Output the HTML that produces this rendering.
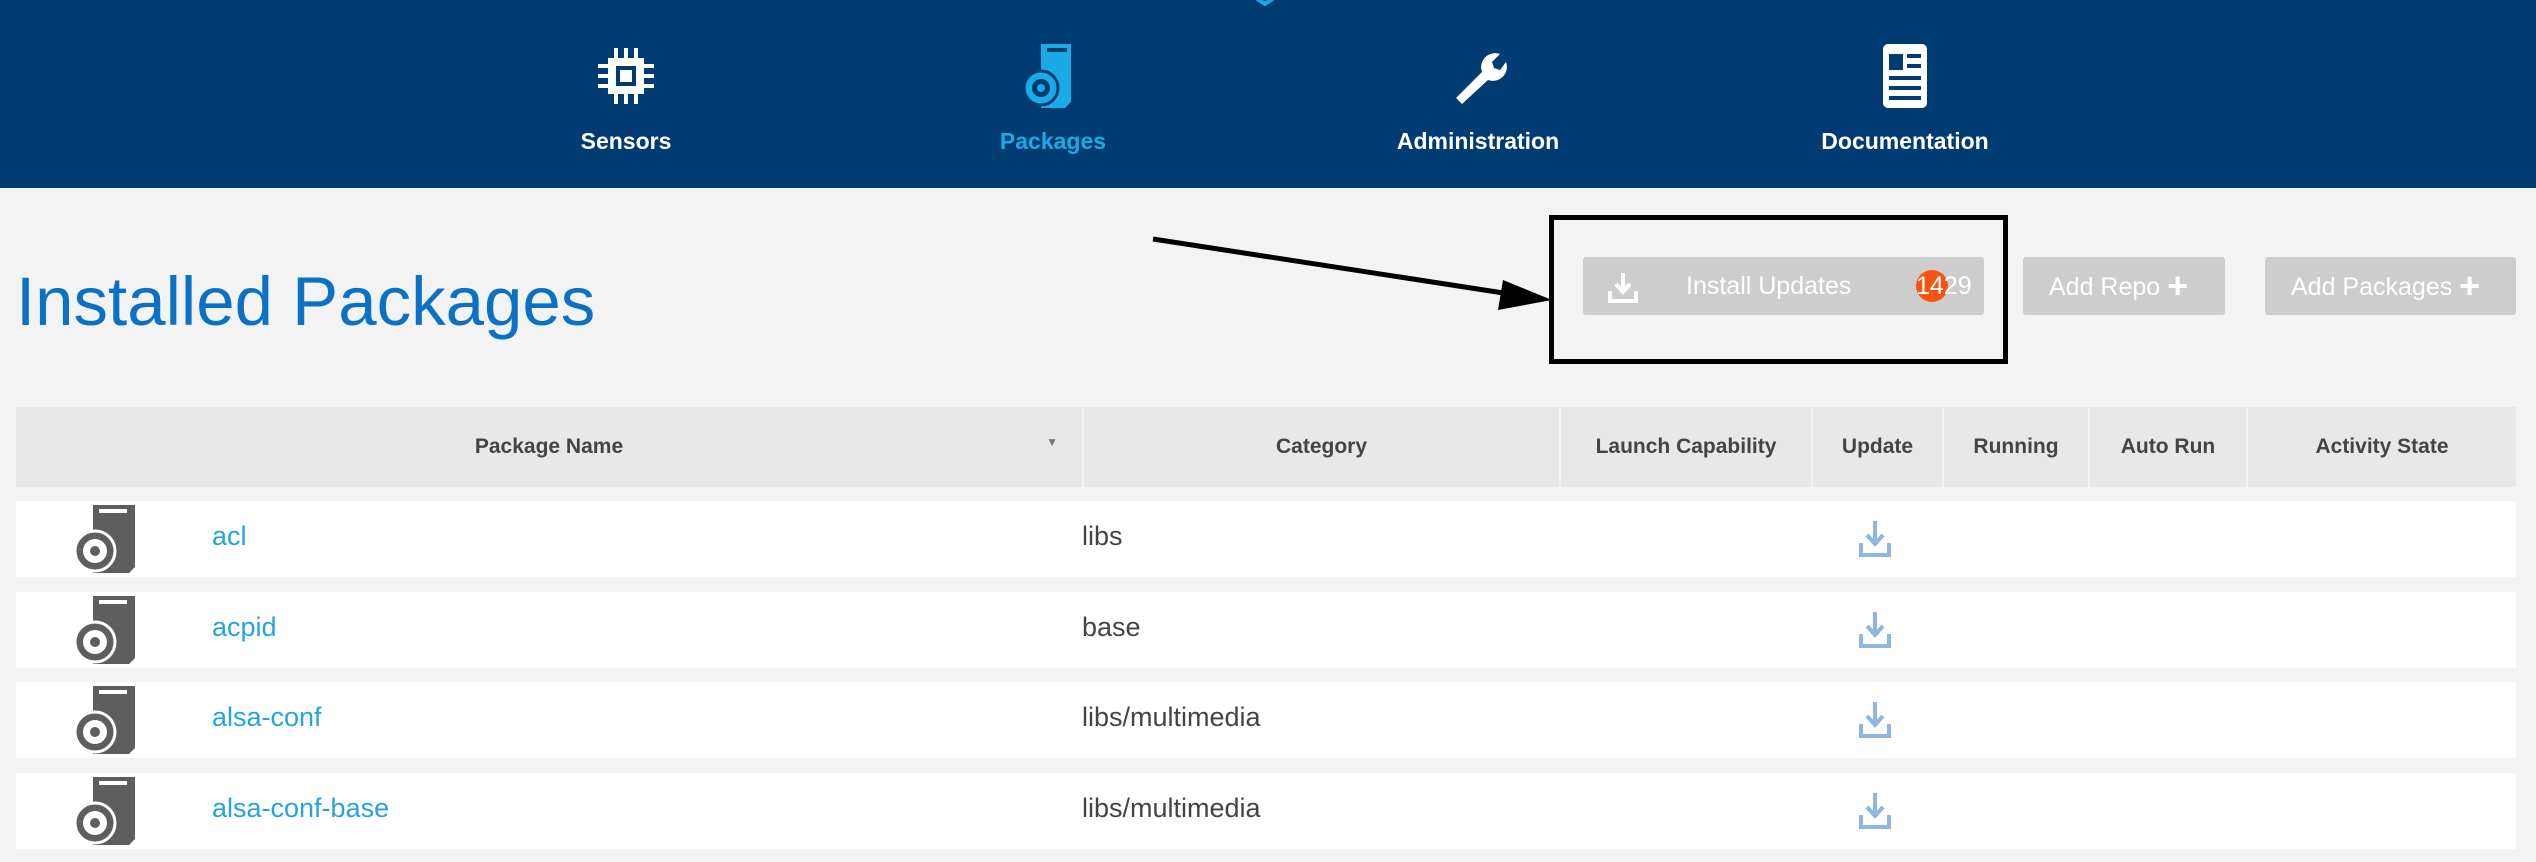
<!DOCTYPE html>
<html><head><meta charset="utf-8"><style>
*{margin:0;padding:0;box-sizing:border-box}
html,body{width:2536px;height:862px;overflow:hidden}
body{background:#f3f3f3;font-family:"Liberation Sans",sans-serif;position:relative}
.nav{position:absolute;left:0;top:0;width:2536px;height:188px;background:#003b71}
.ni{position:absolute;top:40px;width:300px;margin-left:-150px;text-align:center;color:#fff;font-weight:bold;font-size:23px}
.ni svg{display:block;margin:0 auto 16px;height:72px}
.ni.act{color:#1aaae6}
h1{position:absolute;left:16px;top:262px;font-weight:normal;font-size:69px;color:#0a71c4;letter-spacing:0}
.btn{position:absolute;top:257px;height:58px;background:#cdcdcd;color:#fff;font-size:25px;line-height:58px;border-radius:3px}
.box{position:absolute;left:1549px;top:215px;width:459px;height:149px;border:5px solid #000}
table{position:absolute;left:16px;top:407px;width:2500px;border-collapse:separate;border-spacing:0}
th{background:#e8e8e8;height:80px;font-size:21px;font-weight:bold;color:#444;border-left:2px solid #f3f3f3}
.row{position:absolute;left:16px;width:2500px;height:76px;background:#fff}
.row .nm{position:absolute;left:196px;top:20px;font-size:27px;color:#27a3dc}
.row .cat{position:absolute;left:1066px;top:20px;font-size:27px;color:#444}
.row .pk{position:absolute;left:57px;top:2px}
.row .up{position:absolute;left:1842px;top:20px}
</style></head><body>
<div class="nav">
<svg style="position:absolute;left:1248px;top:-6px" width="34" height="14"><path d="M2 0 L17 10 L32 0" stroke="#1aaae6" stroke-width="4" fill="none"/></svg>
<div class="ni" style="left:626px"><svg viewBox="0 0 60 60" width="60"><rect x="12" y="12" width="36" height="36" fill="#fff"/><rect x="20" y="20" width="20" height="20" fill="#003b71"/><rect x="24" y="24" width="12" height="12" fill="#fff"/><g stroke="#fff" stroke-width="4"><path d="M20 2v10M30 2v10M40 2v10M20 48v10M30 48v10M40 48v10M2 20h10M2 30h10M2 40h10M48 20h10M48 30h10M48 40h10"/></g></svg>Sensors</div>
<div class="ni act" style="left:1053px"><svg viewBox="0 0 60 72" width="60"><path d="M18 4h30v58l-6 6H18z" fill="#1aaae6"/><rect x="24" y="8" width="20" height="4" fill="#003b71"/><circle cx="18" cy="48" r="17" fill="#1aaae6" stroke="#003b71" stroke-width="3"/><circle cx="18" cy="48" r="9" fill="#003b71"/><circle cx="18" cy="48" r="4" fill="#1aaae6"/></svg>Packages</div>
<div class="ni" style="left:1478px"><svg viewBox="0 0 60 60" width="60"><path d="M8 52 L34 26 A14 14 0 0 1 52 8 L44 16 L46 22 L52 24 L58 16 A14 14 0 0 1 40 34 L14 58 Z" fill="#fff"/></svg>Administration</div>
<div class="ni" style="left:1905px"><svg viewBox="0 0 60 72" width="60"><rect x="8" y="4" width="44" height="64" rx="5" fill="#fff"/><rect x="14" y="14" width="14" height="16" fill="#003b71"/><rect x="32" y="14" width="14" height="4" fill="#003b71"/><rect x="32" y="24" width="14" height="4" fill="#003b71"/><rect x="14" y="36" width="32" height="4" fill="#003b71"/><rect x="14" y="46" width="32" height="4" fill="#003b71"/><rect x="14" y="56" width="32" height="4" fill="#003b71"/></svg>Documentation</div>
</div>
<h1>Installed Packages</h1>
<div class="btn" style="left:1583px;width:401px"><svg style="position:absolute;left:24px;top:14px" width="32" height="32" viewBox="0 0 32 32"><path d="M16 2v18M9 13l7 8 7-8" stroke="#fff" stroke-width="4" fill="none"/><path d="M3 20v10h26V20" stroke="#fff" stroke-width="4" fill="none"/></svg><span style="position:absolute;left:103px">Install Updates</span><span style="position:absolute;left:333px;top:13px;width:32px;height:32px;border-radius:50%;background:#f7540f"></span><span style="position:absolute;left:333px">1429</span></div>
<div class="btn" style="left:2023px;width:202px;padding-left:26px">Add Repo <span style="font-size:36px;font-weight:bold;vertical-align:-3px">+</span></div>
<div class="btn" style="left:2265px;width:251px;padding-left:26px">Add Packages <span style="font-size:36px;font-weight:bold;vertical-align:-3px">+</span></div>
<div class="box"></div>
<svg style="position:absolute;left:0;top:0" width="2536" height="862"><line x1="1153" y1="239" x2="1510" y2="294" stroke="#000" stroke-width="5"/><path d="M1552 300 L1503 280 L1498 310 Z" fill="#000"/></svg>
<table><tr>
<th style="width:1066px;border-left:0;position:relative">Package Name<span style="position:absolute;right:24px;font-size:12px;color:#777">▼</span></th>
<th style="width:477px">Category</th><th style="width:252px">Launch Capability</th><th style="width:131px">Update</th><th style="width:146px">Running</th><th style="width:158px">Auto Run</th><th>Activity State</th></tr></table>
<div class="row" style="top:501px"><svg class="pk" width="64" height="72" viewBox="0 0 64 72"><path d="M20 2h42v62l-6 6H20z" fill="#5e5e5e"/><rect x="26" y="6" width="28" height="4" fill="#fff"/><circle cx="22" cy="48" r="20" fill="#5e5e5e" stroke="#fff" stroke-width="3"/><circle cx="22" cy="48" r="12" fill="#fff"/><circle cx="22" cy="48" r="5" fill="#5e5e5e"/></svg><span class="nm">acl</span><span class="cat">libs</span><svg class="up" width="34" height="36" viewBox="0 0 34 36"><path d="M17 0v22M9 14l8 9 8-9" stroke="#8fb6e0" stroke-width="4" fill="none"/><path d="M3 22v12h28V22" stroke="#8fb6e0" stroke-width="4" fill="none"/></svg></div>
<div class="row" style="top:592px"><svg class="pk" width="64" height="72" viewBox="0 0 64 72"><path d="M20 2h42v62l-6 6H20z" fill="#5e5e5e"/><rect x="26" y="6" width="28" height="4" fill="#fff"/><circle cx="22" cy="48" r="20" fill="#5e5e5e" stroke="#fff" stroke-width="3"/><circle cx="22" cy="48" r="12" fill="#fff"/><circle cx="22" cy="48" r="5" fill="#5e5e5e"/></svg><span class="nm">acpid</span><span class="cat">base</span><svg class="up" width="34" height="36" viewBox="0 0 34 36"><path d="M17 0v22M9 14l8 9 8-9" stroke="#8fb6e0" stroke-width="4" fill="none"/><path d="M3 22v12h28V22" stroke="#8fb6e0" stroke-width="4" fill="none"/></svg></div>
<div class="row" style="top:682px"><svg class="pk" width="64" height="72" viewBox="0 0 64 72"><path d="M20 2h42v62l-6 6H20z" fill="#5e5e5e"/><rect x="26" y="6" width="28" height="4" fill="#fff"/><circle cx="22" cy="48" r="20" fill="#5e5e5e" stroke="#fff" stroke-width="3"/><circle cx="22" cy="48" r="12" fill="#fff"/><circle cx="22" cy="48" r="5" fill="#5e5e5e"/></svg><span class="nm">alsa-conf</span><span class="cat">libs/multimedia</span><svg class="up" width="34" height="36" viewBox="0 0 34 36"><path d="M17 0v22M9 14l8 9 8-9" stroke="#8fb6e0" stroke-width="4" fill="none"/><path d="M3 22v12h28V22" stroke="#8fb6e0" stroke-width="4" fill="none"/></svg></div>
<div class="row" style="top:773px"><svg class="pk" width="64" height="72" viewBox="0 0 64 72"><path d="M20 2h42v62l-6 6H20z" fill="#5e5e5e"/><rect x="26" y="6" width="28" height="4" fill="#fff"/><circle cx="22" cy="48" r="20" fill="#5e5e5e" stroke="#fff" stroke-width="3"/><circle cx="22" cy="48" r="12" fill="#fff"/><circle cx="22" cy="48" r="5" fill="#5e5e5e"/></svg><span class="nm">alsa-conf-base</span><span class="cat">libs/multimedia</span><svg class="up" width="34" height="36" viewBox="0 0 34 36"><path d="M17 0v22M9 14l8 9 8-9" stroke="#8fb6e0" stroke-width="4" fill="none"/><path d="M3 22v12h28V22" stroke="#8fb6e0" stroke-width="4" fill="none"/></svg></div>
</body></html>
